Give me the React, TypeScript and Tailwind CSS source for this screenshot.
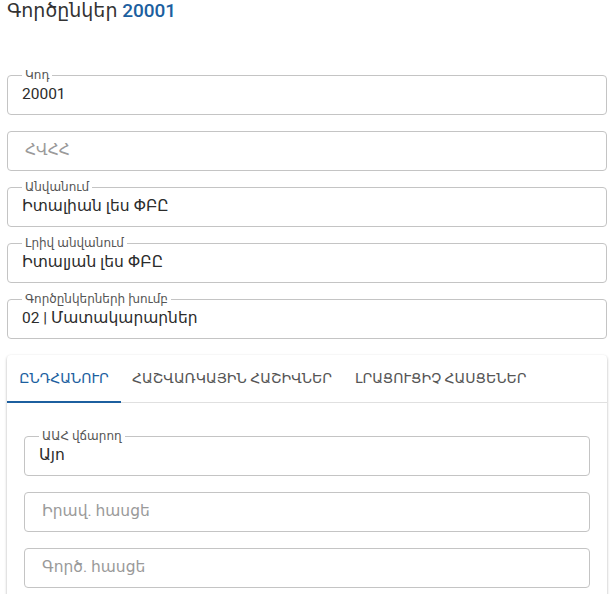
import React from "react";

const font = { fontFamily: "Roboto, 'Noto Sans', 'DejaVu Sans', sans-serif" };

function Field({ label, value, placeholder }: { label?: string; value?: string; placeholder?: string }) {
  return (
    <div className="relative h-10 rounded-[4px] border border-[#c4c4c4] flex items-center">
      {label && (
        <span className="absolute -top-[8px] left-[14px] bg-white px-[3px] text-[12px] leading-[14px] text-[#555]">
          {label}
        </span>
      )}
      {value ? (
        <span className="pl-[14px] text-[15.5px] text-[#2b2b2b]">{value}</span>
      ) : (
        <span className="pl-[17px] text-[15.5px] text-[#9a9a9a]">{placeholder}</span>
      )}
    </div>
  );
}

export default function App() {
  return (
    <div className="bg-white w-[611px] h-[594px] overflow-hidden" style={font}>
      <div className="ml-[7px] w-[600px]">
        <div className="h-[75px] text-[19px] leading-[22px] text-[#333]">
          Գործընկեր <span className="text-[#1c5f9f] font-medium">20001</span>
        </div>
        <div className="flex flex-col gap-4">
          <Field label="Կոդ" value="20001" />
          <Field placeholder="ՀՎՀՀ" />
          <Field label="Անվանում" value="Իտալիան լես ՓԲԸ" />
          <Field label="Լրիվ անվանում" value="Իտալյան լես ՓԲԸ" />
          <Field label="Գործընկերների խումբ" value="02 | Մատակարարներ" />
          <div className="rounded-[4px] bg-white shadow-[0_1px_3px_0_rgba(0,0,0,0.2),0_1px_1px_0_rgba(0,0,0,0.14),0_2px_4px_-1px_rgba(0,0,0,0.12)] h-[260px]">
            <div className="flex h-12 border-b border-[#e0e0e0] text-[14px] uppercase">
              <div className="relative w-[114px] flex items-center justify-center text-[#1c5f9f]">
                ԸՆԴՀԱՆՈՒՐ
                <div className="absolute left-0 right-0 -bottom-[1px] h-[2px] bg-[#1c5f9f]" />
              </div>
              <div className="px-[11px] flex items-center text-[#555]">ՀԱՇՎԱՌԿԱՅԻՆ ՀԱՇԻՎՆԵՐ</div>
              <div className="px-[12px] flex items-center text-[#555]">ԼՐԱՑՈՒՑԻՉ ՀԱՍՑԵՆԵՐ</div>
            </div>
            <div className="px-[17px] pt-[33px] flex flex-col gap-4">
              <Field label="ԱԱՀ վճարող" value="Այո" />
              <Field placeholder="Իրավ. հասցե" />
              <Field placeholder="Գործ. հասցե" />
            </div>
          </div>
        </div>
      </div>
    </div>
  );
}
